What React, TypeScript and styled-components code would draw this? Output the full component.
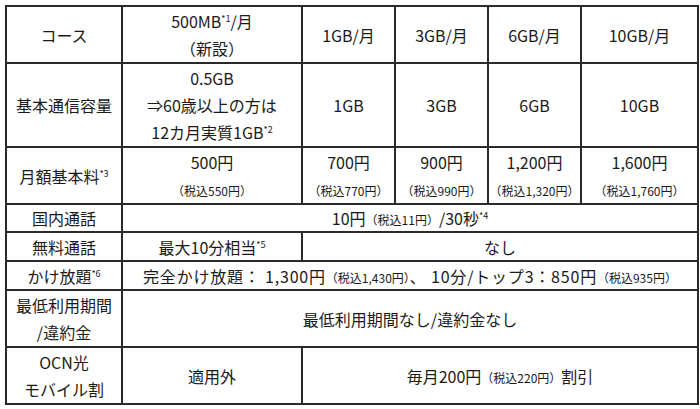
import React from 'react'
import styled, { createGlobalStyle } from 'styled-components'

const GlobalStyle = createGlobalStyle`
  html, body {
    margin: 0;
    padding: 0;
    background: #fff;
  }
`

const Page = styled.div`
  padding: 5px 0 0 5px;
  font-family: 'Noto Sans CJK JP', 'Noto Sans', sans-serif;
  color: #1a1a1a;
`

const PlanTable = styled.table`
  border-collapse: collapse;
  table-layout: fixed;
  width: 692px;
  border: 2px solid #2a2a2a;
`

const Row = styled.tr<{ $h: number }>`
  height: ${(p) => p.$h}px;
`

const Cell = styled.td<{ $wide?: boolean }>`
  border: 2px solid #2a2a2a;
  padding: 0;
  text-align: center;
  vertical-align: middle;
  font-size: 16px;
  line-height: 24px;
  white-space: nowrap;
  letter-spacing: ${(p) => (p.$wide ? '0.8px' : '0')};
`

const Line = styled.div`
  line-height: 27px;
  height: 27px;
`

const Tax = styled.span`
  font-size: 12px;
  line-height: 1;
  letter-spacing: 0;
`

const Note = styled.sup`
  font-size: 9px;
  vertical-align: 6px;
  line-height: 0;
  letter-spacing: 0;
`

const cols = [116, 180, 93, 93, 93, 117]

const plans = [
  { name: '1GB/月', cap: '1GB', price: '700円', tax: '（税込770円）' },
  { name: '3GB/月', cap: '3GB', price: '900円', tax: '（税込990円）' },
  { name: '6GB/月', cap: '6GB', price: '1,200円', tax: '（税込1,320円）' },
  { name: '10GB/月', cap: '10GB', price: '1,600円', tax: '（税込1,760円）' },
]

export default function App() {
  return (
    <>
      <GlobalStyle />
      <Page>
        <PlanTable>
          <colgroup>
            {cols.map((w, i) => (
              <col key={i} style={{ width: w }} />
            ))}
          </colgroup>
          <tbody>
            <Row $h={57}>
              <Cell>コース</Cell>
              <Cell>
                <Line>
                  500MB<Note>*1</Note>/月
                </Line>
                <Line>（新設）</Line>
              </Cell>
              {plans.map((p) => (
                <Cell key={p.name}>{p.name}</Cell>
              ))}
            </Row>
            <Row $h={84}>
              <Cell>基本通信容量</Cell>
              <Cell>
                <Line>0.5GB</Line>
                <Line>⇒60歳以上の方は</Line>
                <Line>
                  12カ月実質1GB<Note>*2</Note>
                </Line>
              </Cell>
              {plans.map((p) => (
                <Cell key={p.name}>{p.cap}</Cell>
              ))}
            </Row>
            <Row $h={57}>
              <Cell>
                月額基本料<Note>*3</Note>
              </Cell>
              <Cell>
                <Line>500円</Line>
                <Line>
                  <Tax>（税込550円）</Tax>
                </Line>
              </Cell>
              {plans.map((p) => (
                <Cell key={p.name}>
                  <Line>{p.price}</Line>
                  <Line>
                    <Tax>{p.tax}</Tax>
                  </Line>
                </Cell>
              ))}
            </Row>
            <Row $h={28}>
              <Cell>国内通話</Cell>
              <Cell colSpan={5}>
                10円<Tax>（税込11円）</Tax>/30秒<Note>*4</Note>
              </Cell>
            </Row>
            <Row $h={29}>
              <Cell>無料通話</Cell>
              <Cell>
                最大10分相当<Note>*5</Note>
              </Cell>
              <Cell colSpan={4}>なし</Cell>
            </Row>
            <Row $h={29}>
              <Cell>
                かけ放題<Note>*6</Note>
              </Cell>
              <Cell colSpan={5} $wide>
                完全かけ放題： 1,300円<Tax>（税込1,430円）</Tax>、 10分/トップ3：850円
                <Tax>（税込935円）</Tax>
              </Cell>
            </Row>
            <Row $h={57}>
              <Cell>
                <Line>最低利用期間</Line>
                <Line>/違約金</Line>
              </Cell>
              <Cell colSpan={5}>最低利用期間なし/違約金なし</Cell>
            </Row>
            <Row $h={57}>
              <Cell>
                <Line>OCN光</Line>
                <Line>モバイル割</Line>
              </Cell>
              <Cell>適用外</Cell>
              <Cell colSpan={4}>
                毎月200円<Tax>（税込220円）</Tax>割引
              </Cell>
            </Row>
          </tbody>
        </PlanTable>
      </Page>
    </>
  )
}
